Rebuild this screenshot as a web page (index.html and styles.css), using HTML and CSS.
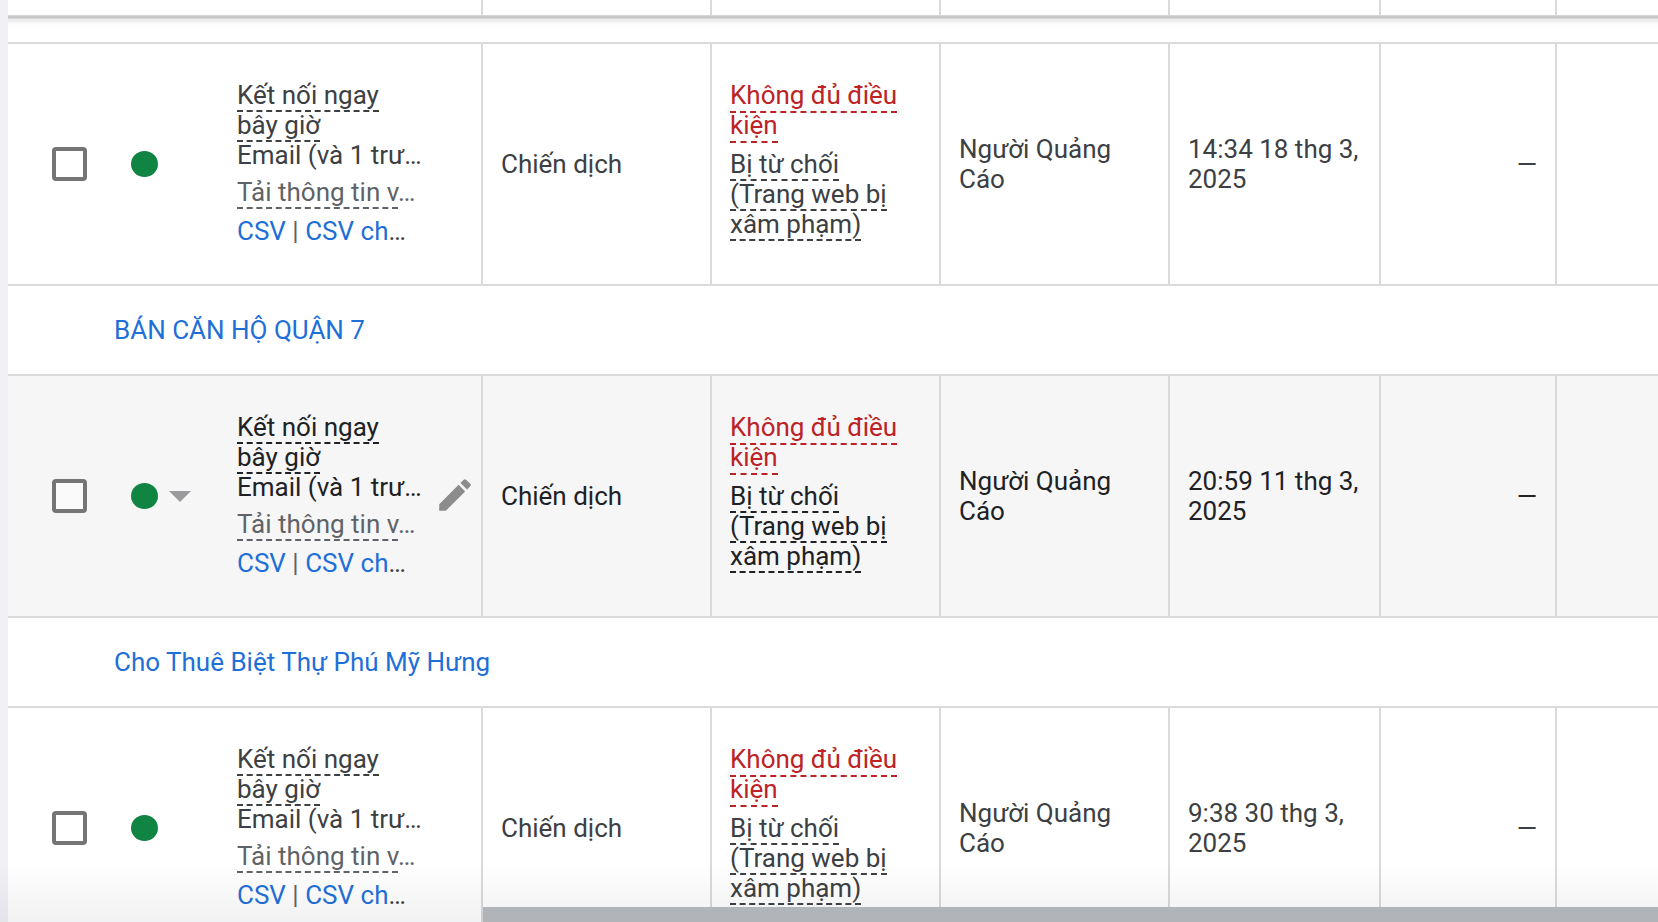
FILE: index.html
```html
<!DOCTYPE html>
<html lang="vi">
<head>
<meta charset="utf-8">
<title>Thành phần</title>
<link rel="stylesheet" href="styles.css">
</head>
<body>
<div class="app">
  <div class="rail"></div>
  <main class="main">
    <table class="grid">
      <colgroup>
        <col class="col-check"><col class="col-status"><col class="col-name"><col class="col-std"><col class="col-std"><col class="col-std"><col class="col-date"><col class="col-value"><col>
      </colgroup>
      <thead>
        <tr class="head"><td></td><td></td><td class="line"></td><td class="line"></td><td class="line"></td><td class="line"></td><td class="line"></td><td class="line"></td><td></td></tr>
      </thead>
      <tbody>
        <tr class="tail"><td colspan="9"></td></tr>
        <tr class="row">
          <td class="check"><input type="checkbox" class="box" aria-label="Chọn hàng 1"></td>
          <td><div class="status"><span class="dot"></span></div></td>
          <td class="line top"><div class="name">
            <div class="asset">
              <div><span class="tip">Kết nối ngay<br>bây giờ</span></div>
              <div>Email (và 1 trư…</div>
              <div class="download"><span class="tip">Tải thông tin v</span>…</div>
              <div class="files"><a href="#">CSV</a> | <a href="#">CSV ch</a><span class="more">…</span></div>
            </div>
          </div></td>
          <td class="line text">Chiến dịch</td>
          <td class="line text top">
            <div class="error"><span class="tip">Không đủ điều kiện</span></div>
            <div class="reason"><span class="tip">Bị từ chối<br>(Trang web bị xâm phạm)</span></div>
          </td>
          <td class="line text">Người Quảng Cáo</td>
          <td class="line text">14:34 18 thg 3, 2025</td>
          <td class="line text number">—</td>
          <td></td>
        </tr>
        <tr class="group"><td colspan="9"><a href="#">BÁN CĂN HỘ QUẬN 7</a></td></tr>
        <tr class="row active">
          <td class="check"><input type="checkbox" class="box" aria-label="Chọn hàng 2"></td>
          <td><div class="status"><span class="dot"></span><button class="caret" aria-label="Đổi trạng thái"><svg width="22" height="11" viewBox="0 0 22 11"><path d="M0 0h22L11 11z" fill="#9b9b9e"/></svg></button></div></td>
          <td class="line top"><div class="name">
            <div class="asset">
              <div><span class="tip">Kết nối ngay<br>bây giờ</span></div>
              <div>Email (và 1 trư…</div>
              <div class="download"><span class="tip">Tải thông tin v</span>…</div>
              <div class="files"><a href="#">CSV</a> | <a href="#">CSV ch</a><span class="more">…</span></div>
            </div>
            <button class="edit" aria-label="Chỉnh sửa"><svg width="42" height="42" viewBox="0 0 24 24"><path d="M3 17.25V21h3.75L17.81 9.94l-3.75-3.75L3 17.25zM20.71 7.04a1 1 0 0 0 0-1.41l-2.34-2.34a1 1 0 0 0-1.41 0l-1.83 1.83 3.75 3.75 1.83-1.83z" fill="#8c8c8c"/></svg></button>
          </div></td>
          <td class="line text">Chiến dịch</td>
          <td class="line text top">
            <div class="error"><span class="tip">Không đủ điều kiện</span></div>
            <div class="reason"><span class="tip">Bị từ chối<br>(Trang web bị xâm phạm)</span></div>
          </td>
          <td class="line text">Người Quảng Cáo</td>
          <td class="line text">20:59 11 thg 3, 2025</td>
          <td class="line text number">—</td>
          <td></td>
        </tr>
        <tr class="group"><td colspan="9"><a href="#">Cho Thuê Biệt Thự Phú Mỹ Hưng</a></td></tr>
        <tr class="row">
          <td class="check"><input type="checkbox" class="box" aria-label="Chọn hàng 3"></td>
          <td><div class="status"><span class="dot"></span></div></td>
          <td class="line top"><div class="name">
            <div class="asset">
              <div><span class="tip">Kết nối ngay<br>bây giờ</span></div>
              <div>Email (và 1 trư…</div>
              <div class="download"><span class="tip">Tải thông tin v</span>…</div>
              <div class="files"><a href="#">CSV</a> | <a href="#">CSV ch</a><span class="more">…</span></div>
            </div>
          </div></td>
          <td class="line text">Chiến dịch</td>
          <td class="line text top">
            <div class="error"><span class="tip">Không đủ điều kiện</span></div>
            <div class="reason"><span class="tip">Bị từ chối<br>(Trang web bị xâm phạm)</span></div>
          </td>
          <td class="line text">Người Quảng Cáo</td>
          <td class="line text">9:38 30 thg 3, 2025</td>
          <td class="line text number">—</td>
          <td></td>
        </tr>
      </tbody>
    </table>
  </main>
  <div class="fade"></div>
  <div class="scrollbar"><div class="fixed-part"></div><div class="thumb"></div></div>
</div>
</body>
</html>
```
FILE: styles.css
```css
* { box-sizing: border-box; }

body {
  margin: 0;
  font: 26px/30px Roboto, "Noto Sans", sans-serif;
  color: #3c4043;
  background: #fff;
}

.app {
  display: flex;
  position: relative;
  height: 100vh;
  overflow: hidden;
}

.rail {
  flex: 0 0 8px;
  background: #f1f0f7;
}

.main {
  flex: 1;
  min-width: 0;
}

.grid {
  width: 100%;
  table-layout: fixed;
  border-collapse: separate;
  border-spacing: 0;
}

.col-check { width: 100px; }
.col-status { width: 129px; }
.col-name { width: 246px; }
.col-std { width: 229px; }
.col-date { width: 211px; }
.col-value { width: 176px; }

td { padding: 0; }

.line { border-right: 2px solid #dadadc; }

.head td { height: 15px; }

.tail td {
  height: 29px;
  border-bottom: 2px solid #dadadc;
  background: linear-gradient(#dcdcdc, #c2c2c2 2px, #c8c8c8 3px, #e9e9e9 4px, #f2f2f2 7px, #fdfdfd 9px, #fff 16px);
}

.row td {
  height: 242px;
  border-bottom: 2px solid #dadadc;
}

.row.active {
  background: #f6f6f7;
  color: #202124;
}

.row .top {
  padding-top: 36px;
  vertical-align: top;
}

.row .text {
  padding-left: 18px;
  padding-right: 18px;
}

.row .number { text-align: right; }

.check { padding-left: 44px; }

.box {
  display: block;
  appearance: none;
  width: 35px;
  height: 34px;
  margin: 0;
  border: 4px solid #757575;
  border-radius: 4px;
  background: #fff;
}

.active .box { background: #fafafa; }

.status {
  display: flex;
  align-items: center;
  gap: 11px;
  padding-left: 23px;
}

.dot {
  width: 27px;
  height: 26px;
  border-radius: 50%;
  background: #0f8443;
}

button {
  display: block;
  padding: 0;
  border: 0;
  background: none;
}

button svg { display: block; }

.name {
  display: flex;
  align-items: center;
}

.asset {
  flex: 0 0 197px;
  white-space: nowrap;
}

.tip { border-bottom: 2px dashed currentColor; }

.download {
  margin-top: 7px;
  color: #5f6368;
}

.files {
  margin-top: 9px;
  color: #5f6368;
}

.more { color: #3c4043; }

.error { color: #bc2226; }

.error .tip { padding-bottom: 1px; }

.reason { margin-top: 9px; }

a {
  color: #1f6fd8;
  text-decoration: none;
}

.group td {
  height: 90px;
  padding-left: 106px;
  border-bottom: 2px solid #dadadc;
}

.fade {
  position: absolute;
  inset: auto 0 0 0;
  height: 60px;
  background: linear-gradient(rgba(60, 64, 80, 0), rgba(60, 64, 80, 0.07));
}

.scrollbar {
  display: flex;
  position: absolute;
  inset: auto 0 0 0;
  height: 15px;
}

.fixed-part {
  flex: 0 0 483px;
}

.thumb {
  flex: 1;
  background: #b1b4b8;
}
```
